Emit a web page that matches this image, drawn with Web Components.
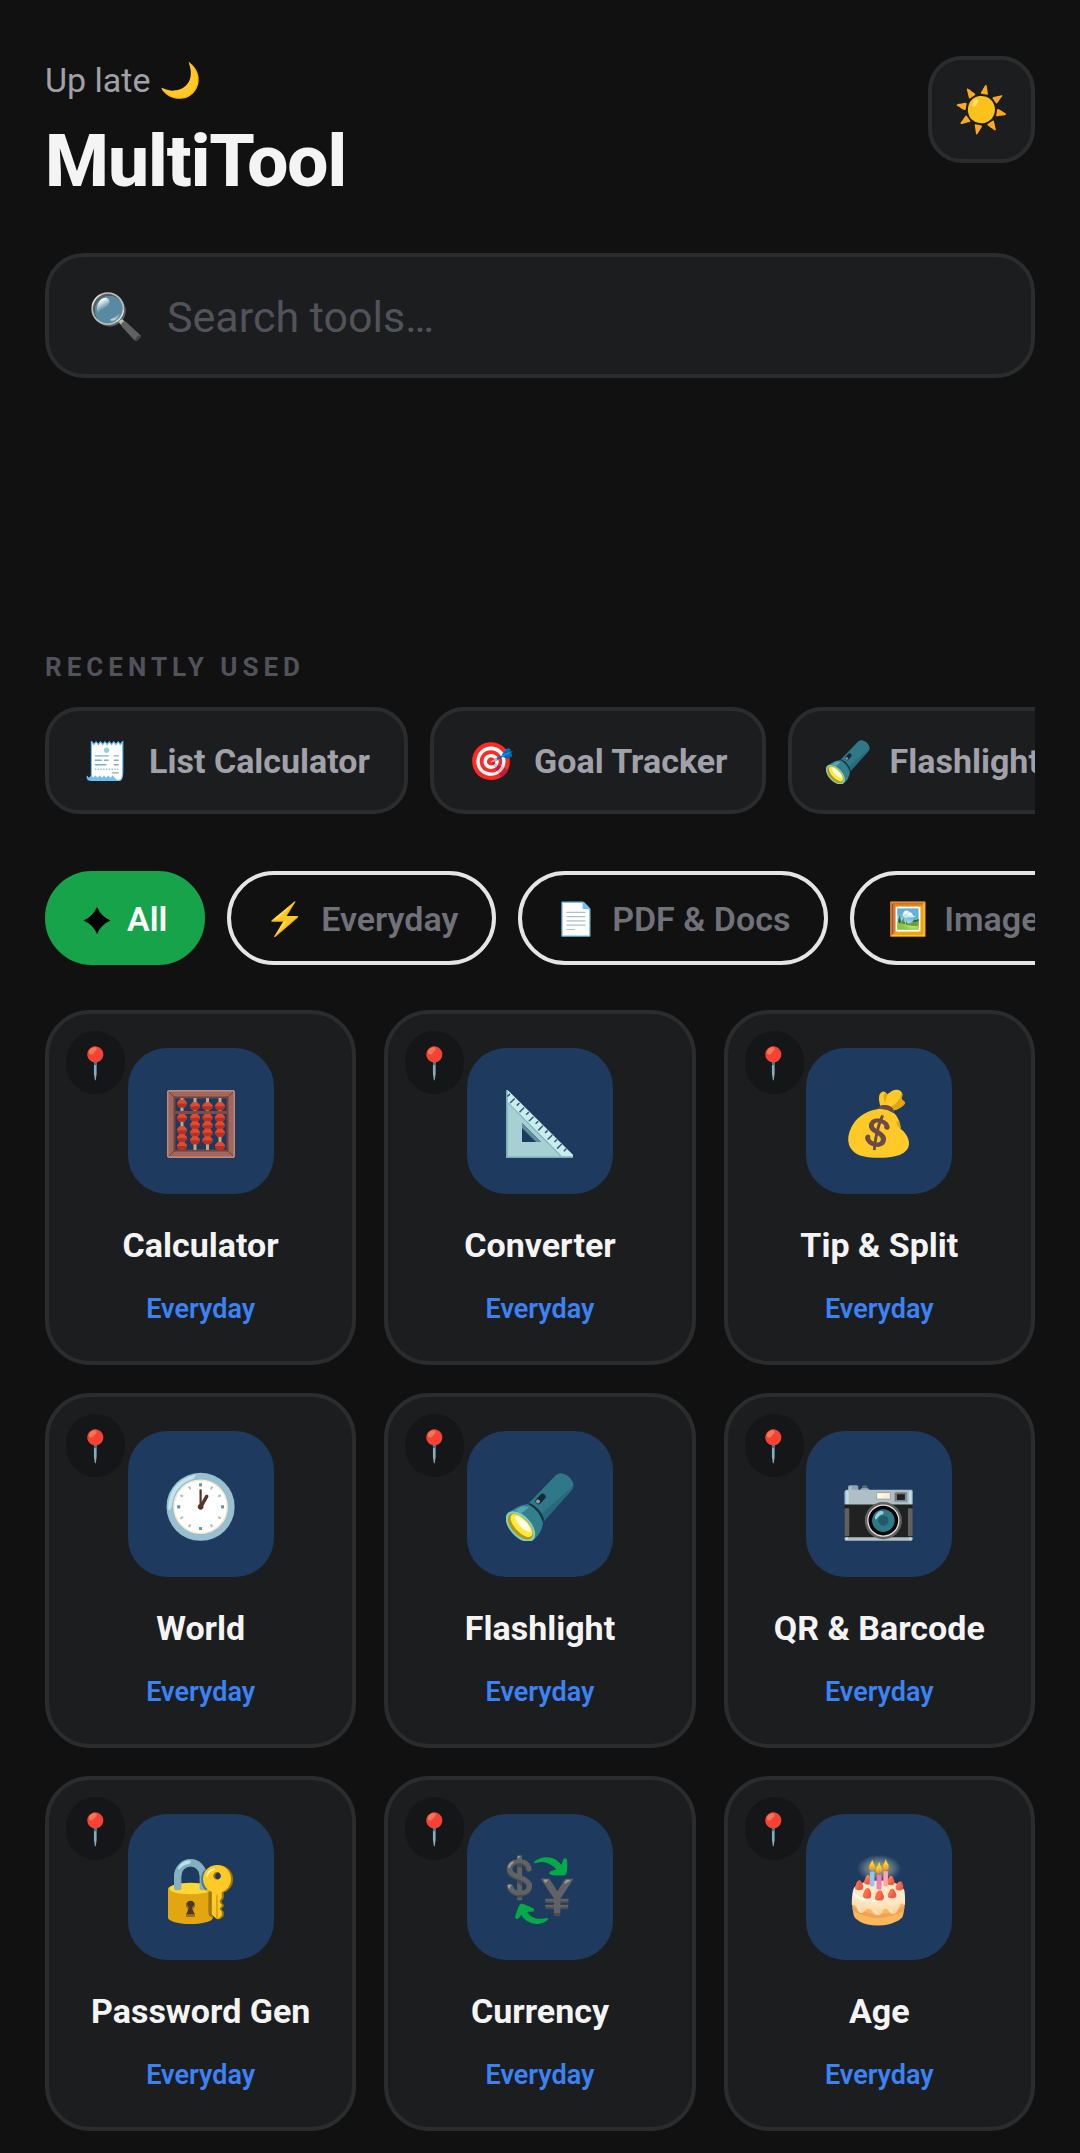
<!DOCTYPE html>
<html lang="en">
<head>
<meta charset="utf-8">
<meta name="viewport" content="width=device-width, initial-scale=1">
<title>MultiTool</title>
<style>
    html {
        background: #111111;
    }
    body {
        --surface: #1c1d1f;
        --line: #2b2c2d;
        margin: 0;
        background: #111111;
        color: #f4f4f5;
        font-family: Roboto, "Noto Color Emoji", sans-serif;
    }
</style>
</head>
<body>
<multi-tool-app>
    <app-header slot="header" greeting="Up late 🌙">MultiTool</app-header>
    <search-box slot="search" icon="🔍" placeholder="Search tools…"></search-box>
    <chip-row slot="recent" heading="Recently used">
        <recent-chip icon="🧾">List Calculator</recent-chip>
        <recent-chip icon="🎯">Goal Tracker</recent-chip>
        <recent-chip icon="flashlight">Flashlight</recent-chip>
    </chip-row>
    <chip-row slot="filters">
        <filter-chip icon="star" active>All</filter-chip>
        <filter-chip icon="⚡">Everyday</filter-chip>
        <filter-chip icon="📄">PDF &amp; Docs</filter-chip>
        <filter-chip icon="🖼️">Images</filter-chip>
    </chip-row>
    <tool-card icon="abacus" category="Everyday">Calculator</tool-card>
    <tool-card icon="set-square" category="Everyday">Converter</tool-card>
    <tool-card icon="💰" category="Everyday">Tip &amp; Split</tool-card>
    <tool-card icon="🕐" category="Everyday">World</tool-card>
    <tool-card icon="flashlight" category="Everyday">Flashlight</tool-card>
    <tool-card icon="📷" category="Everyday">QR &amp; Barcode</tool-card>
    <tool-card icon="🔐" category="Everyday">Password Gen</tool-card>
    <tool-card icon="💱" category="Everyday">Currency</tool-card>
    <tool-card icon="🎂" category="Everyday">Age</tool-card>
</multi-tool-app>

<script>
// one entry per rod: x, then the y of each bead
const ABACUS_RODS = [
    [15, 13.5, 27.7, 40.3, 48, 56],
    [28, 16.3, 27.7, 35.3, 42.7, 50.3],
    [40.5, 16.3, 27.7, 35.3, 42.7, 50.3],
    [53, 16.3, 27.7, 35.3, 42.7, 56]
];

function abacusRod([x, ...beads]) {
    return `<path d="M${x} 8V60" stroke="#c4a582" stroke-width="3"/>` + beads.map(y => `
        <path d="M${x - 2.5} ${y - 4}h5l2.5 3v2l-2.5 3h-5l-2.5 -3v-2z" fill="#e04a33"/>
        <path d="M${x - 5} ${y}h10v1l-2.5 3h-5l-2.5 -3z" fill="#b8301f"/>
    `).join('');
}

function rulerTicks() {
    let d = '';
    for (let i = 0; i < 13; i++) {
        const x = 4 + i * 4.7;
        const length = i % 2 ? 4.6 : 2.6;
        d += `M${x} ${x * 0.97}l${-length} ${length}`;
    }
    return d;
}

// drawn icons; any other icon value is shown as an emoji
const ICONS = {
    'star': `
        <svg viewBox="0 0 28 30" aria-hidden="true">
            <path d="M14 3Q18 12.500 27.500 16.500Q18 20.500 14 30Q10 20.500 0.500 16.500Q10 12.500 14 3Z" fill="#000000"/>
        </svg>`,
    'abacus': `
        <svg viewBox="0 0 68 68" aria-hidden="true">
            <path fill-rule="evenodd" d="M2 0H66Q68 0 68 2V66Q68 68 66 68H2Q0 68 0 66V2Q0 0 2 0ZM8 8V60H60V8Z" fill="#a0675a"/>
            <rect x="0.700" y="0.700" width="66.600" height="66.600" rx="2" fill="none" stroke="#bd8b7d" stroke-width="1.400"/>
            <rect x="7.500" y="7.500" width="53" height="53" fill="none" stroke="#6f4444" stroke-width="2"/>
            <path d="M2 2L8 8M66 2L60 8M2 66L8 60M66 66L60 60" stroke="#6f3f37" stroke-width="1"/>
            ${ABACUS_RODS.map(abacusRod).join('')}
            <path d="M8 22.500H60" stroke="#7c4d48" stroke-width="3"/>
        </svg>`,
    'set-square': `
        <svg viewBox="0 0 68 68" aria-hidden="true">
            <path fill-rule="evenodd" d="M0 1Q0 0 1.500 0L67 65V67Q67 68 66 68H1Q0 68 0 67ZM16 33V52H35Z" fill="#a7d0d5"/>
            <path d="M1.500 0L67 65V66H55L1.500 13Z" fill="#c9ecee"/>
            <path d="M2 13L55 66" stroke="#86b3bb" stroke-width="1.200"/>
            <path d="M16 33L35 52H30L16 38Z" fill="#5f8e9c"/>
            <path d="M0.800 1V67.200H66.500" fill="none" stroke="#7fabb5" stroke-width="1.600"/>
            <path d="${rulerTicks()}" stroke="#315f66" stroke-width="1.500"/>
        </svg>`,
    'flashlight': `
        <svg viewBox="0 0 68 68" aria-hidden="true">
            <path d="M50 2Q55 -2 62 3Q69 9 67 15L38 48L22 31Z" fill="#2f7889"/>
            <path d="M67 13Q67 15 66 17L38 48L33 43Z" fill="#276b7a"/>
            <rect x="-6" y="-3" width="12" height="6" rx="3" transform="translate(34.500 26) rotate(-47)" fill="#16292f"/>
            <circle cx="32" cy="28.500" r="2" fill="#7fa3ad"/>
            <path d="M22 31Q12 32 2 40L27 67Q36 61 37 49Q33 37 22 31Z" fill="#327f8d"/>
            <path d="M22 31Q33 37 37 49L38 46Q34 35 24 30Z" fill="#12333b"/>
            <path d="M16 33L23 34L15 41L9 37Z" fill="#57a2b3"/>
            <ellipse cx="14.500" cy="53.500" rx="18.500" ry="10.500" transform="rotate(47 14.500 53.500)" fill="#7fcfc3"/>
            <ellipse cx="14.500" cy="53.500" rx="16" ry="8.500" transform="rotate(47 14.500 53.500)" fill="#b8960f"/>
            <ellipse cx="15.500" cy="52.500" rx="14.500" ry="6.500" transform="rotate(47 15.500 52.500)" fill="#ffe93b"/>
            <ellipse cx="17" cy="51" rx="10.500" ry="3.500" transform="rotate(47 17 51)" fill="#fffde7"/>
        </svg>`
};

function setIcon(element, name) {
    if (ICONS[name]) {
        element.innerHTML = ICONS[name];
    } else {
        element.textContent = name;
    }
}

class MultiToolApp extends HTMLElement {
    constructor() {
        super();
        this.attachShadow({ mode: 'open' });
        this.shadowRoot.innerHTML = `
            <style>
                :host {
                    display: block;
                    padding: 56px 45px 22px;
                }
                .recent {
                    margin-top: 272px;
                }
                .filters {
                    margin-top: 57px;
                }
                .grid {
                    display: grid;
                    grid-template-columns: repeat(3, minmax(0, 1fr));
                    gap: 28px;
                    margin-top: 45px;
                }
            </style>
            <slot name="header"></slot>
            <main>
                <slot name="search"></slot>
                <div class="recent"><slot name="recent"></slot></div>
                <div class="filters"><slot name="filters"></slot></div>
                <div class="grid"><slot></slot></div>
            </main>
        `;
    }
}

class AppHeader extends HTMLElement {
    constructor() {
        super();
        this.attachShadow({ mode: 'open' });
        this.shadowRoot.innerHTML = `
            <style>
                :host {
                    display: block;
                    margin-bottom: 48px;
                }
                header {
                    display: flex;
                    justify-content: space-between;
                    align-items: flex-start;
                }
                p {
                    margin: 0 0 14px;
                    color: #a1a1aa;
                    font-size: 34px;
                    line-height: 48px;
                }
                h1 {
                    margin: 0;
                    font-size: 73px;
                    font-weight: 800;
                    line-height: 87px;
                    letter-spacing: -1px;
                }
                button {
                    box-sizing: border-box;
                    width: 107px;
                    height: 107px;
                    padding: 0;
                    border: 4px solid var(--line);
                    border-radius: 34px;
                    background: var(--surface);
                    font: 44px/50px Roboto, "Noto Color Emoji", sans-serif;
                }
            </style>
            <header>
                <div>
                    <p></p>
                    <h1><slot></slot></h1>
                </div>
                <button type="button" aria-label="Light theme">☀️</button>
            </header>
        `;
    }

    connectedCallback() {
        this.shadowRoot.querySelector('p').textContent = this.getAttribute('greeting');
    }
}

class SearchBox extends HTMLElement {
    constructor() {
        super();
        this.attachShadow({ mode: 'open' });
        this.shadowRoot.innerHTML = `
            <style>
                :host {
                    display: block;
                }
                label {
                    box-sizing: border-box;
                    display: flex;
                    align-items: center;
                    gap: 23px;
                    height: 125px;
                    padding: 2px 39px 0;
                    border: 4px solid var(--line);
                    border-radius: 39px;
                    background: var(--surface);
                }
                span {
                    font-size: 45px;
                }
                input {
                    flex: 1;
                    min-width: 0;
                    padding: 0;
                    border: 0;
                    outline: 0;
                    background: none;
                    color: #f4f4f5;
                    font: 43px/56px Roboto, sans-serif;
                }
                input::placeholder {
                    color: #52525b;
                }
            </style>
            <label>
                <span></span>
                <input type="text" aria-label="Search tools">
            </label>
        `;
    }

    connectedCallback() {
        this.shadowRoot.querySelector('span').textContent = this.getAttribute('icon');
        this.shadowRoot.querySelector('input').placeholder = this.getAttribute('placeholder');
    }
}

class ChipRow extends HTMLElement {
    constructor() {
        super();
        this.attachShadow({ mode: 'open' });
        this.shadowRoot.innerHTML = `
            <style>
                :host {
                    display: block;
                }
                h2 {
                    margin: 0 0 23px;
                    color: #52525b;
                    font-size: 26px;
                    font-weight: 700;
                    line-height: 34px;
                    letter-spacing: 5px;
                    text-transform: uppercase;
                }
                .row {
                    display: flex;
                    gap: 22px;
                    overflow: hidden;
                }
            </style>
            <h2 hidden></h2>
            <div class="row"><slot></slot></div>
        `;
    }

    connectedCallback() {
        if (this.hasAttribute('heading')) {
            const heading = this.shadowRoot.querySelector('h2');
            heading.textContent = this.getAttribute('heading');
            heading.hidden = false;
        }
    }
}

class RecentChip extends HTMLElement {
    constructor() {
        super();
        this.attachShadow({ mode: 'open' });
        this.shadowRoot.innerHTML = `
            <style>
                :host {
                    display: block;
                    flex: none;
                }
                button {
                    box-sizing: border-box;
                    display: flex;
                    align-items: center;
                    gap: 20px;
                    height: 107px;
                    padding: 0 34px;
                    border: 4px solid var(--line);
                    border-radius: 34px;
                    background: var(--surface);
                    color: #a1a1aa;
                    font: 700 34px/44px Roboto, "Noto Color Emoji", sans-serif;
                    white-space: nowrap;
                }
                .icon {
                    padding-top: 2px;
                    font-size: 37px;
                    font-weight: 400;
                }
                svg {
                    display: block;
                    width: 44px;
                    height: 44px;
                }
            </style>
            <button type="button"><span class="icon"></span><slot></slot></button>
        `;
    }

    connectedCallback() {
        setIcon(this.shadowRoot.querySelector('.icon'), this.getAttribute('icon'));
    }
}

class FilterChip extends HTMLElement {
    constructor() {
        super();
        this.attachShadow({ mode: 'open' });
        this.shadowRoot.innerHTML = `
            <style>
                :host {
                    display: block;
                    flex: none;
                }
                button {
                    box-sizing: border-box;
                    display: flex;
                    align-items: center;
                    gap: 16px;
                    height: 94px;
                    padding: 1px 34px 0;
                    border: 4px solid #e5e5e5;
                    border-radius: 47px;
                    background: none;
                    color: #71717a;
                    font: 600 34px/44px Roboto, "Noto Color Emoji", sans-serif;
                    white-space: nowrap;
                }
                button[aria-pressed="true"] {
                    border-color: #16a34a;
                    background: #16a34a;
                    color: #ffffff;
                }
                .icon {
                    padding-top: 1px;
                    font-size: 32px;
                    font-weight: 400;
                }
                svg {
                    display: block;
                    width: 28px;
                    height: 30px;
                }
            </style>
            <button type="button"><span class="icon"></span><slot></slot></button>
        `;
    }

    connectedCallback() {
        this.shadowRoot.querySelector('button').setAttribute('aria-pressed', this.hasAttribute('active'));
        setIcon(this.shadowRoot.querySelector('.icon'), this.getAttribute('icon'));
    }
}

class ToolCard extends HTMLElement {
    constructor() {
        super();
        this.attachShadow({ mode: 'open' });
        this.shadowRoot.innerHTML = `
            <style>
                :host {
                    display: block;
                    position: relative;
                }
                a {
                    box-sizing: border-box;
                    display: flex;
                    flex-direction: column;
                    align-items: center;
                    padding: 34px 12px;
                    border: 4px solid var(--line);
                    border-radius: 45px;
                    background: var(--surface);
                    color: #f4f4f5;
                    text-decoration: none;
                }
                .tile {
                    box-sizing: border-box;
                    display: flex;
                    align-items: center;
                    justify-content: center;
                    width: 146px;
                    height: 146px;
                    padding-top: 5px;
                    border-radius: 39px;
                    background: #1e3a5f;
                    font-size: 62px;
                }
                svg {
                    width: 68px;
                    height: 68px;
                }
                .name {
                    margin-top: 29px;
                    font-size: 34px;
                    font-weight: 700;
                    line-height: 45px;
                }
                .category {
                    margin-top: 24px;
                    color: #3b82f6;
                    font-size: 27px;
                    font-weight: 600;
                    line-height: 35px;
                }
                button {
                    position: absolute;
                    top: 21px;
                    left: 21px;
                    display: flex;
                    align-items: center;
                    justify-content: center;
                    width: 59px;
                    height: 63px;
                    padding: 2px 0 0;
                    border: 0;
                    border-radius: 30px;
                    background: #151617;
                    font: 31px/36px Roboto, "Noto Color Emoji", sans-serif;
                }
            </style>
            <a href="#">
                <span class="tile"></span>
                <span class="name"><slot></slot></span>
                <span class="category"></span>
            </a>
            <button type="button" aria-label="Pin tool">📍</button>
        `;
    }

    connectedCallback() {
        setIcon(this.shadowRoot.querySelector('.tile'), this.getAttribute('icon'));
        this.shadowRoot.querySelector('.category').textContent = this.getAttribute('category');
    }
}

customElements.define('multi-tool-app', MultiToolApp);
customElements.define('app-header', AppHeader);
customElements.define('search-box', SearchBox);
customElements.define('chip-row', ChipRow);
customElements.define('recent-chip', RecentChip);
customElements.define('filter-chip', FilterChip);
customElements.define('tool-card', ToolCard);
</script>
</body>
</html>
